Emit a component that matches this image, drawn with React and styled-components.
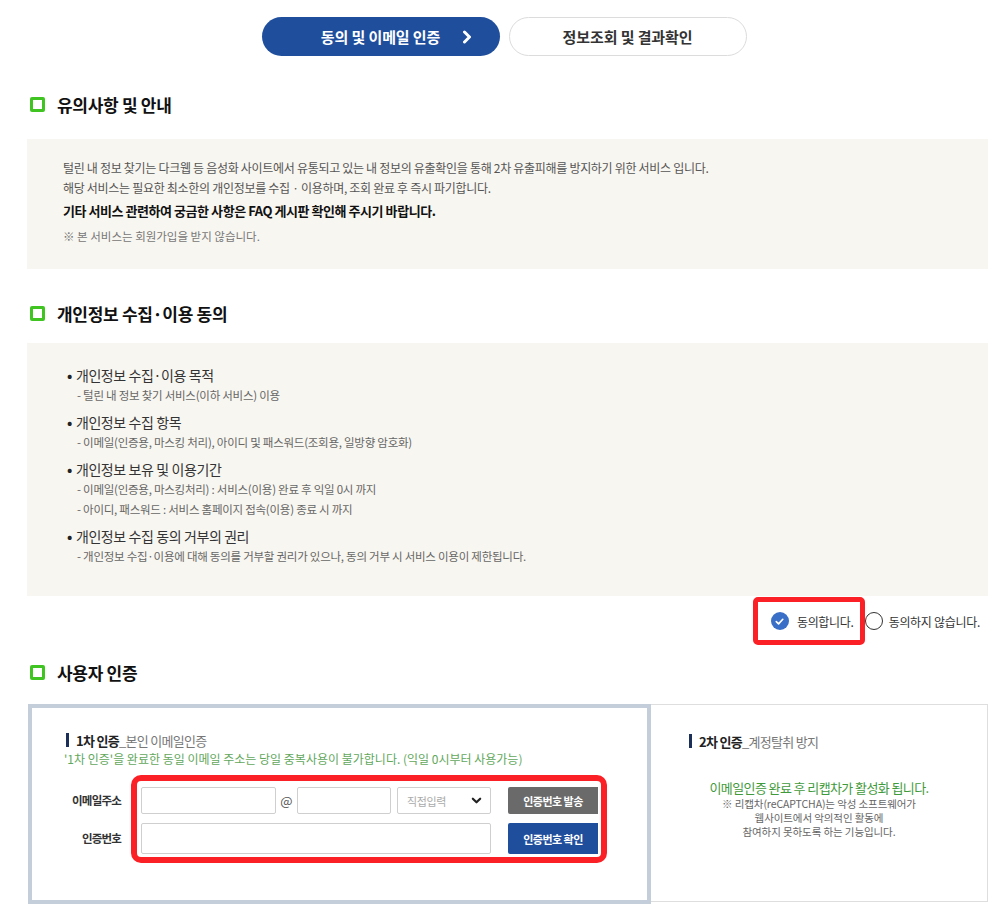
import React from "react";
import styled, { createGlobalStyle } from "styled-components";

const Global = createGlobalStyle`
  html, body { margin: 0; padding: 0; background: #fff; }
  body {
    font-family: "Noto Sans CJK KR", "Noto Sans", sans-serif;
    color: #222;
    -webkit-font-smoothing: antialiased;
  }
  * { box-sizing: border-box; }
`;

const Page = styled.div`
  width: 961px;
  margin-left: 27px;
  padding-top: 17px;
  padding-bottom: 4px;
`;

const Tabs = styled.div`
  display: flex;
  justify-content: center;
  gap: 9px;
  padding-right: 7px;
`;

const Tab = styled.div`
  width: 238px;
  height: 39px;
  border-radius: 20px;
  display: grid;
  grid-template-columns: 1fr auto 1fr;
  align-items: center;
  font-size: 15px;
  font-weight: 700;
  letter-spacing: -0.1px;
  background: ${(p) => (p.$active ? "#1f4e9d" : "#fff")};
  color: ${(p) => (p.$active ? "#fff" : "#333")};
  border: ${(p) => (p.$active ? "none" : "1px solid #dcdcdc")};
`;

const TabLabel = styled.span`
  grid-column: 2;
`;

const TabArrow = styled.span`
  grid-column: 3;
  justify-self: end;
  padding-right: 26px;
  display: flex;
`;

const SectionTitle = styled.h2`
  margin: ${(p) => p.$mt}px 0 ${(p) => p.$mb}px;
  padding-left: 3px;
  display: flex;
  align-items: center;
  gap: 12px;
  height: 24px;
  font-size: 17px;
  font-weight: 700;
  letter-spacing: -0.3px;
  color: #111;
`;

const GreenSquare = styled.span`
  width: 15px;
  height: 15px;
  border: 3px solid #3fc421;
  border-radius: 2px;
  flex: none;
`;

const InfoBox = styled.div`
  background: #f8f6f0;
  padding: ${(p) => p.$pad};
`;

const NoticeLine = styled.p`
  margin: 0;
  font-size: ${(p) => p.$size || 12}px;
  line-height: ${(p) => p.$lh || 20}px;
  font-weight: ${(p) => (p.$bold ? 700 : 400)};
  color: ${(p) => p.$color || "#555"};
  letter-spacing: ${(p) => p.$ls ?? -0.3}px;
`;

const Item = styled.div`
  & + & { margin-top: 8px; }
`;

const ItemHead = styled.div`
  font-size: 14px;
  line-height: 19px;
  color: #333;
  letter-spacing: -0.4px;
  display: flex;
  gap: 4px;
  &::before {
    content: "•";
    color: #222;
    font-weight: 700;
  }
`;

const ItemSub = styled.div`
  font-size: 11.5px;
  line-height: 20px;
  color: #666;
  letter-spacing: -0.25px;
  padding-left: 10px;
`;

const AgreeRow = styled.div`
  display: flex;
  justify-content: flex-end;
  align-items: center;
  padding-right: 8px;
  margin-top: 1px;
`;

const RedFrame = styled.div`
  border: ${(p) => p.$w || 5}px solid #fb2025;
  border-radius: ${(p) => p.$r || 5}px;
  padding: ${(p) => p.$pad};
`;

const RadioOpt = styled.label`
  display: flex;
  align-items: center;
  gap: ${(p) => p.$gap || 8}px;
  font-size: 12px;
  color: #333;
  letter-spacing: -0.3px;
  height: 38px;
`;

const Circle = styled.span`
  width: 18px;
  height: 18px;
  border-radius: 50%;
  flex: none;
  display: flex;
  align-items: center;
  justify-content: center;
  background: ${(p) => (p.$on ? "#3a6fc7" : "#fff")};
  border: ${(p) => (p.$on ? "none" : "1px solid #333")};
`;

const AuthWrap = styled.div`
  display: flex;
  margin-left: 1px;
`;

const LeftPanel = styled.div`
  width: 623px;
  height: 200px;
  border: 4px solid #c4cdda;
  padding: 22px 20px 0 34px;
`;

const RightPanel = styled.div`
  flex: 1;
  height: 198px;
  border: 1px solid #dedede;
  border-left: none;
  padding: 26px 0 0 38px;
`;

const AuthHead = styled.div`
  display: flex;
  align-items: center;
  height: 20px;
  font-size: 13px;
  letter-spacing: -0.7px;
  color: #777;
  &::before {
    content: "";
    width: 3px;
    height: 14px;
    background: #1b2f58;
    margin-right: 7px;
  }
  b { color: #222; font-weight: 700; }
`;

const GreenNote = styled.div`
  font-size: 12px;
  line-height: 18px;
  color: #62a85c;
  letter-spacing: 0;
  margin-left: -2px;
`;

const FormArea = styled.div`
  display: flex;
  align-items: flex-start;
  gap: 10px;
  margin-top: 7px;
`;

const LabelCol = styled.div`
  width: 55px;
  display: flex;
  flex-direction: column;
  padding-top: 12px;
`;

const FieldLabel = styled.div`
  height: ${(p) => p.$h}px;
  line-height: ${(p) => p.$h}px;
  margin-bottom: ${(p) => p.$mb || 0}px;
  text-align: right;
  font-size: 11.5px;
  font-weight: 700;
  color: #333;
  letter-spacing: -0.8px;
  white-space: nowrap;
`;

const FieldRow = styled.div`
  display: flex;
  align-items: center;
  height: ${(p) => p.$h}px;
  & + & { margin-top: 9px; }
`;

const Input = styled.div`
  width: ${(p) => p.$w}px;
  height: 100%;
  border: 1px solid #cfcfcf;
  border-radius: 2px;
  background: #fff;
  margin-right: ${(p) => p.$mr || 0}px;
`;

const At = styled.span`
  width: 21px;
  text-align: center;
  font-size: 13px;
  color: #555;
`;

const Select = styled.div`
  width: 94px;
  height: 100%;
  border: 1px solid #cfcfcf;
  border-radius: 2px;
  display: flex;
  align-items: center;
  justify-content: space-between;
  padding: 0 8px 0 9px;
  font-size: 11px;
  color: #aaa;
  letter-spacing: -0.4px;
  margin-right: 17px;
`;

const Btn = styled.div`
  width: 90px;
  height: 100%;
  display: flex;
  align-items: center;
  justify-content: center;
  font-size: 11px;
  font-weight: 700;
  color: #fff;
  letter-spacing: -0.5px;
  background: ${(p) => p.$bg};
  border-radius: 2px 0 0 2px;
`;

const CaptchaInfo = styled.div`
  margin-left: -38px;
  margin-top: 28px;
  text-align: center;
`;

const CaptchaGreen = styled.div`
  font-size: 13px;
  line-height: 18px;
  color: #3f9a3b;
  letter-spacing: -0.6px;
`;

const CaptchaGray = styled.div`
  font-size: 10.5px;
  line-height: 14px;
  color: #666;
  letter-spacing: -0.1px;
`;

const Chevron = ({ color = "#fff", size = 14, w = 3 }) => (
  <svg width={size} height={size} viewBox="0 0 14 14">
    <path d="M4.5 2 L9.5 7 L4.5 12" fill="none" stroke={color} strokeWidth={w} strokeLinecap="round" strokeLinejoin="round" />
  </svg>
);

const DownChevron = () => (
  <svg width="11" height="11" viewBox="0 0 12 12">
    <path d="M2 4 L6 8 L10 4" fill="none" stroke="#222" strokeWidth="2.4" strokeLinecap="round" strokeLinejoin="round" />
  </svg>
);

const Check = () => (
  <svg width="11" height="11" viewBox="0 0 12 12">
    <path d="M2.5 6.2 L5 8.6 L9.6 3.6" fill="none" stroke="#fff" strokeWidth="1.8" strokeLinecap="round" strokeLinejoin="round" />
  </svg>
);

const items = [
  { head: "개인정보 수집·이용 목적", subs: ["- 털린 내 정보 찾기 서비스(이하 서비스) 이용"] },
  { head: "개인정보 수집 항목", subs: ["- 이메일(인증용, 마스킹 처리), 아이디 및 패스워드(조회용, 일방향 암호화)"] },
  {
    head: "개인정보 보유 및 이용기간",
    subs: ["- 이메일(인증용, 마스킹처리) : 서비스(이용) 완료 후 익일 0시 까지", "- 아이디, 패스워드 : 서비스 홈페이지 접속(이용) 종료 시 까지"],
  },
  { head: "개인정보 수집 동의 거부의 권리", subs: ["- 개인정보 수집·이용에 대해 동의를 거부할 권리가 있으나, 동의 거부 시 서비스 이용이 제한됩니다."] },
];

export default function App() {
  return (
    <>
      <Global />
      <Page>
        <Tabs>
          <Tab $active>
            <TabLabel>동의 및 이메일 인증</TabLabel>
            <TabArrow><Chevron /></TabArrow>
          </Tab>
          <Tab>
            <TabLabel>정보조회 및 결과확인</TabLabel>
          </Tab>
        </Tabs>

        <SectionTitle $mt={36} $mb={23}>
          <GreenSquare />유의사항 및 안내
        </SectionTitle>
        <InfoBox $pad="19px 36px 21px 36px">
          <NoticeLine>털린 내 정보 찾기는 다크웹 등 음성화 사이트에서 유통되고 있는 내 정보의 유출확인을 통해 2차 유출피해를 방지하기 위한 서비스 입니다.</NoticeLine>
          <NoticeLine>해당 서비스는 필요한 최소한의 개인정보를 수집 · 이용하며, 조회 완료 후 즉시 파기합니다.</NoticeLine>
          <NoticeLine $size={13} $lh={26} $bold $color="#111" $ls={-0.45}>기타 서비스 관련하여 궁금한 사항은 FAQ 게시판 확인해 주시기 바랍니다.</NoticeLine>
          <NoticeLine $size={11.5} $lh={24} $color="#777" $ls={0}>※ 본 서비스는 회원가입을 받지 않습니다.</NoticeLine>
        </InfoBox>

        <SectionTitle $mt={32} $mb={18}>
          <GreenSquare />개인정보 수집·이용 동의
        </SectionTitle>
        <InfoBox $pad="23px 40px 30px 40px">
          {items.map((it) => (
            <Item key={it.head}>
              <ItemHead>{it.head}</ItemHead>
              {it.subs.map((s) => (
                <ItemSub key={s}>{s}</ItemSub>
              ))}
            </Item>
          ))}
        </InfoBox>

        <AgreeRow>
          <RedFrame $pad="0 6px 0 13px">
            <RadioOpt>
              <Circle $on><Check /></Circle>동의합니다.
            </RadioOpt>
          </RedFrame>
          <RadioOpt $gap={6}>
            <Circle />동의하지 않습니다.
          </RadioOpt>
        </AgreeRow>

        <SectionTitle $mt={15} $mb={20}>
          <GreenSquare />사용자 인증
        </SectionTitle>
        <AuthWrap>
          <LeftPanel>
            <AuthHead><b>1차 인증</b>_본인 이메일인증</AuthHead>
            <GreenNote>'1차 인증'을 완료한 동일 이메일 주소는 당일 중복사용이 불가합니다. (익일 0시부터 사용가능)</GreenNote>
            <FormArea>
              <LabelCol>
                <FieldLabel $h={27} $mb={9}>이메일주소</FieldLabel>
                <FieldLabel $h={31}>인증번호</FieldLabel>
              </LabelCol>
              <RedFrame $w={6} $r={10} $pad="6px 3px 3px 4px">
                <FieldRow $h={27}>
                  <Input $w={135} />
                  <At>@</At>
                  <Input $w={94} $mr={6} />
                  <Select>직접입력<DownChevron /></Select>
                  <Btn $bg="#6a6a6a">인증번호 발송</Btn>
                </FieldRow>
                <FieldRow $h={31}>
                  <Input $w={350} $mr={17} />
                  <Btn $bg="#1f4e9d">인증번호 확인</Btn>
                </FieldRow>
              </RedFrame>
            </FormArea>
          </LeftPanel>
          <RightPanel>
            <AuthHead><b>2차 인증</b>_계정탈취 방지</AuthHead>
            <CaptchaInfo>
              <CaptchaGreen>이메일인증 완료 후 리캡차가 활성화 됩니다.</CaptchaGreen>
              <CaptchaGray>※ 리캡차(reCAPTCHA)는 악성 소프트웨어가</CaptchaGray>
              <CaptchaGray>웹사이트에서 악의적인 활동에</CaptchaGray>
              <CaptchaGray>참여하지 못하도록 하는 기능입니다.</CaptchaGray>
            </CaptchaInfo>
          </RightPanel>
        </AuthWrap>
      </Page>
    </>
  );
}
